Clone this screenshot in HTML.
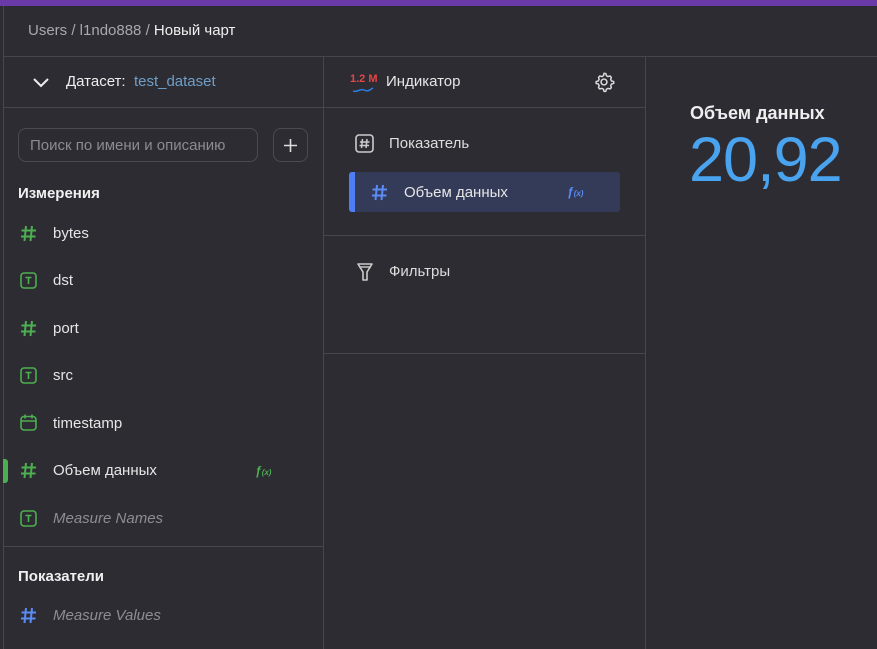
<!DOCTYPE html><html><head><meta charset="utf-8"><style>
*{margin:0;padding:0;box-sizing:border-box}
body{width:877px;height:649px;overflow:hidden;background:#2d2c33;font-family:"Liberation Sans",sans-serif;color:#e6e6e6;position:relative}
.a{position:absolute}
.t{font-size:15px;white-space:nowrap}
.ln{position:absolute;background:#47464c}
.g{color:#4caf50}
</style></head><body>
<div class="a" style="left:0;top:0;width:877px;height:6px;background:#6a3aa8"></div>
<div class="ln" style="left:3px;top:6px;width:1px;height:643px"></div>
<div class="a t" style="left:28px;top:22px;color:#a9a8ad">Users / l1ndo888 / <span style="color:#f0f0f0">Новый чарт</span></div>
<div class="ln" style="left:3px;top:56px;width:874px;height:1px"></div>
<div class="ln" style="left:323px;top:57px;width:1px;height:592px"></div>
<div class="ln" style="left:645px;top:57px;width:1px;height:592px"></div>
<div class="ln" style="left:3px;top:107px;width:642px;height:1px"></div>
<svg class="a" style="left:32px;top:76px" width="18" height="12"><path d="M2 3l7 7 7-7" stroke="#eee" stroke-width="2" fill="none"/></svg>
<div class="a t" style="left:66px;top:73px;color:#eee">Датасет:&nbsp; <span style="color:#6f9fc8">test_dataset</span></div>
<div class="a" style="left:18px;top:128px;width:240px;height:34px;border:1px solid #4c4b51;border-radius:8px"></div>
<div class="a t" style="left:30px;top:137px;color:#8c8b90">Поиск по имени и описанию</div>
<div class="a" style="left:273px;top:128px;width:35px;height:34px;border:1px solid #4c4b51;border-radius:8px"></div>
<svg class="a" style="left:282px;top:137px" width="17" height="17"><path d="M8.5 2v13M2 8.5h13" stroke="#ddd" stroke-width="1.6"/></svg>
<div class="a t" style="left:18px;top:185px;font-weight:bold;color:#f0f0f0">Измерения</div>
<svg class="a" style="left:20px;top:225px" width="17" height="17"><path d="M6 1l-1.5 15M12 1l-1.5 15M1.5 5.5h14.5M1 11.5h14.5" stroke="#4caf50" stroke-width="2"/></svg><div class="a t" style="left:53px;top:225px">bytes</div>
<svg class="a" style="left:20px;top:272px" width="17" height="17"><rect x="1" y="1" width="15" height="15" rx="3" stroke="#4caf50" stroke-width="1.6" fill="none"/><path d="M5.5 5.5h6M8.5 5.5v6.5" stroke="#4caf50" stroke-width="1.6"/></svg><div class="a t" style="left:53px;top:272px">dst</div>
<svg class="a" style="left:20px;top:320px" width="17" height="17"><path d="M6 1l-1.5 15M12 1l-1.5 15M1.5 5.5h14.5M1 11.5h14.5" stroke="#4caf50" stroke-width="2"/></svg><div class="a t" style="left:53px;top:320px">port</div>
<svg class="a" style="left:20px;top:367px" width="17" height="17"><rect x="1" y="1" width="15" height="15" rx="3" stroke="#4caf50" stroke-width="1.6" fill="none"/><path d="M5.5 5.5h6M8.5 5.5v6.5" stroke="#4caf50" stroke-width="1.6"/></svg><div class="a t" style="left:53px;top:367px">src</div>
<svg class="a" style="left:20px;top:414px" width="17" height="17"><rect x="1" y="2.5" width="15" height="13.5" rx="3" stroke="#4caf50" stroke-width="1.6" fill="none"/><path d="M1 7h15M5 0.5v4M12 0.5v4" stroke="#4caf50" stroke-width="1.6"/></svg><div class="a t" style="left:53px;top:415px">timestamp</div>
<div class="a" style="left:3px;top:459px;width:5px;height:24px;background:#4caf50;border-radius:0 3px 3px 0"></div>
<svg class="a" style="left:20px;top:462px" width="17" height="17"><path d="M6 1l-1.5 15M12 1l-1.5 15M1.5 5.5h14.5M1 11.5h14.5" stroke="#4caf50" stroke-width="2"/></svg><div class="a t" style="left:53px;top:462px">Объем данных</div>
<div class="a g" style="left:255px;top:464px;font-size:12px;font-style:italic;font-weight:bold">ƒ<span style="font-size:8px">(x)</span></div>
<svg class="a" style="left:20px;top:510px" width="17" height="17"><rect x="1" y="1" width="15" height="15" rx="3" stroke="#4caf50" stroke-width="1.6" fill="none"/><path d="M5.5 5.5h6M8.5 5.5v6.5" stroke="#4caf50" stroke-width="1.6"/></svg><div class="a t" style="left:53px;top:510px;font-style:italic;color:#8e8d92">Measure Names</div>
<div class="ln" style="left:3px;top:546px;width:320px;height:1px"></div>
<div class="a t" style="left:18px;top:568px;font-weight:bold;color:#f0f0f0">Показатели</div>
<svg class="a" style="left:20px;top:607px" width="17" height="17"><path d="M6 1l-1.5 15M12 1l-1.5 15M1.5 5.5h14.5M1 11.5h14.5" stroke="#5b8cf5" stroke-width="2"/></svg><div class="a t" style="left:53px;top:607px;font-style:italic;color:#8e8d92">Measure Values</div>
<div class="a" style="left:350px;top:73px;font-size:11px;font-weight:bold;color:#e84545">1.2 M</div>
<svg class="a" style="left:352px;top:86px" width="22" height="8"><path d="M1 5c4 2 7-3 11-1s6 0 9-2" stroke="#2a7de1" stroke-width="1.5" fill="none"/></svg>
<div class="a t" style="left:386px;top:73px">Индикатор</div>
<svg class="a" style="left:593px;top:71px" width="22" height="22" viewBox="0 0 24 24"><path d="M12 2.5l2 .3.6 2.3 1.7 1 2.3-.7 1.4 1.5-.7 2.3 1 1.7 2.3.6v2l-2.3.6-1 1.7.7 2.3-1.4 1.5-2.3-.7-1.7 1-.6 2.300h-2l-.6-2.3-1.7-1-2.3.7-1.4-1.5.7-2.3-1-1.7-2.3-.6v-2l2.3-.6 1-1.7-.7-2.3 1.4-1.5 2.3.7 1.7-1 .6-2.3z" stroke="#ddd" stroke-width="1.6" fill="none" stroke-linejoin="round"/><circle cx="12" cy="12" r="3.2" stroke="#ddd" stroke-width="1.6" fill="none"/></svg>
<svg class="a" style="left:355px;top:134px" width="19" height="19"><rect x="1" y="1" width="17" height="17" rx="3" stroke="#ccc" stroke-width="1.6" fill="none"/><path d="M7.5 5l-1 9M12 5l-1 9M5 8h9.5M4.5 11.5h9.5" stroke="#ccc" stroke-width="1.5"/></svg>
<div class="a t" style="left:389px;top:135px;color:#ddd">Показатель</div>
<div class="a" style="left:349px;top:172px;width:271px;height:40px;background:#343b58;border-radius:3px"></div>
<div class="a" style="left:349px;top:172px;width:6px;height:40px;background:#4f7df5;border-radius:3px 0 0 3px"></div>
<svg class="a" style="left:371px;top:184px" width="17" height="17"><path d="M6 1l-1.5 15M12 1l-1.5 15M1.5 5.5h14.5M1 11.5h14.5" stroke="#5b8cf5" stroke-width="2"/></svg>
<div class="a t" style="left:404px;top:184px">Объем данных</div>
<div class="a" style="left:567px;top:185px;font-size:12px;font-style:italic;font-weight:bold;color:#5b8cf5">ƒ<span style="font-size:8px">(x)</span></div>
<div class="ln" style="left:323px;top:235px;width:322px;height:1px"></div>
<svg class="a" style="left:356px;top:262px" width="18" height="20"><path d="M2 2h14l-5 8v8h-4v-8z" stroke="#ccc" stroke-width="1.6" fill="none" stroke-linejoin="round"/><path d="M3 5h12" stroke="#ccc" stroke-width="1.4"/></svg>
<div class="a t" style="left:389px;top:263px;color:#ddd">Фильтры</div>
<div class="ln" style="left:323px;top:353px;width:322px;height:1px"></div>
<div class="a" style="left:690px;top:103px;font-size:18px;font-weight:bold;color:#eee">Объем данных</div>
<div class="a" style="left:689px;top:124px;font-size:63px;color:#4aa3ee;letter-spacing:-1px">20,92</div>
</body></html>
